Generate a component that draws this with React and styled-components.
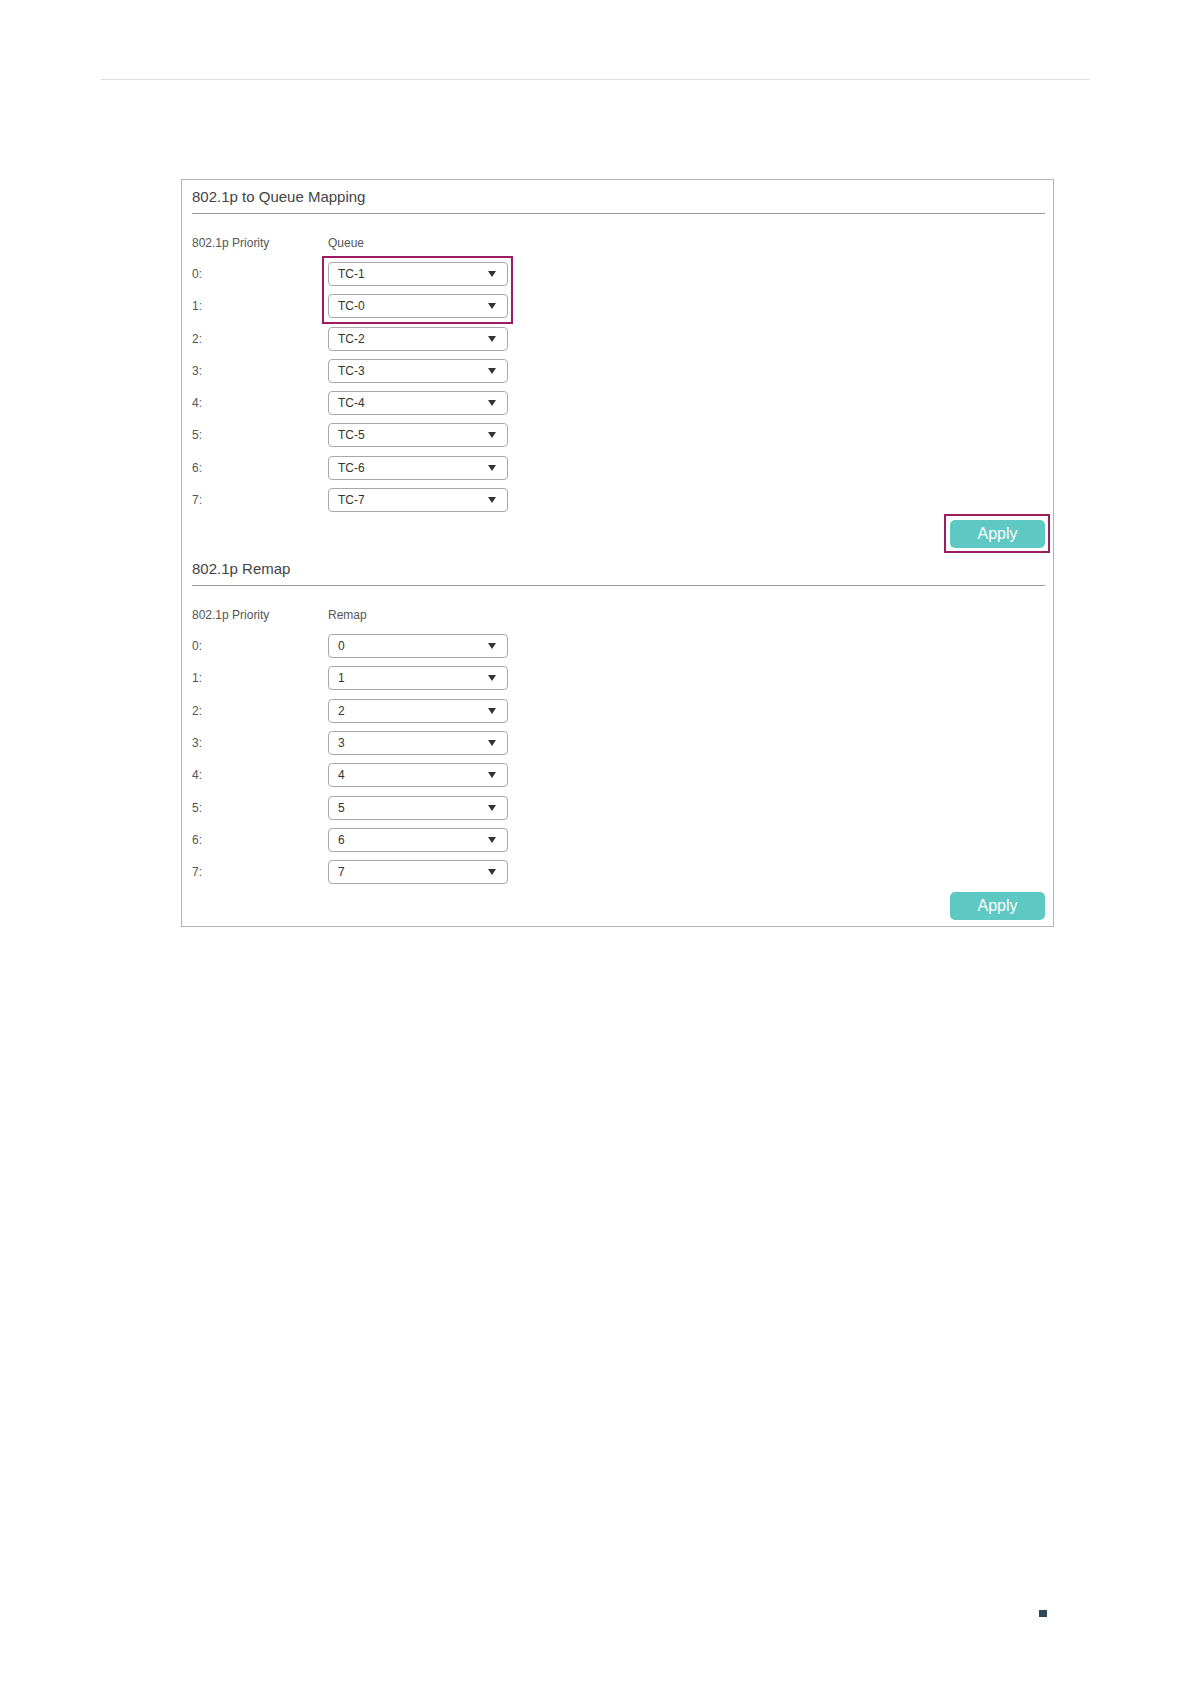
import React from 'react';
import styled, { createGlobalStyle } from 'styled-components';

const GlobalStyle = createGlobalStyle`
    html, body {
        margin: 0;
        padding: 0;
        background: #ffffff;
        font-family: "Liberation Sans", Arial, sans-serif;
    }`;

const Page = styled.div`
    width: 1191px;
    height: 1684px;
    padding-top: 79px;
    box-sizing: border-box;
    background: #fff;`;

const TopRule = styled.div`
    margin: 0 101px;
    height: 1px;
    background: #dedede;`;

const Panel = styled.div`
    margin: 99px 0 0 181px;
    width: 873px;
    box-sizing: border-box;
    border: 1px solid #b4b4b4;
    padding: 0 8px 6px 10px;`;

const SectionTitle = styled.div`
    padding: 7px 0 6px;
    line-height: 20px;
    font-size: 15px;
    color: #444;
    border-bottom: 1px solid #9a9a9a;`;

const Grid = styled.div`
    display: grid;
    grid-template-columns: 136px 180px;
    row-gap: 8.3px;
    align-items: center;`;

const HeaderRow = styled.div`
    display: grid;
    grid-template-columns: 136px 180px;
    margin: 21px 0 11px;
    line-height: 16px;
    font-size: 12px;
    color: #555;`;

const Label = styled.div`
    grid-column: 1;
    grid-row: ${p => p.$row};
    font-size: 12px;
    line-height: 16px;
    color: #555;`;

const Select = styled.div`
    grid-column: 2;
    grid-row: ${p => p.$row};
    height: 24px;
    box-sizing: border-box;
    border: 1px solid #a8a8a8;
    border-radius: 4px;
    padding: 0 11px 0 9px;
    display: flex;
    align-items: center;
    justify-content: space-between;
    font-size: 12px;
    color: #333;
    background: #fff;`;

const Caret = styled.span`
    width: 0;
    height: 0;
    border-left: 4px solid transparent;
    border-right: 4px solid transparent;
    border-top: 6px solid #333;`;

const Highlight = styled.div`
    grid-column: 2;
    grid-row: ${p => p.$from} / span ${p => p.$span};
    align-self: stretch;
    margin: -6px -5px -6px -6px;
    border: 2px solid #9c1c62;
    pointer-events: none;
    z-index: 1;`;

const ButtonRow = styled.div`
    display: flex;
    justify-content: flex-end;
    margin-top: 8px;
    margin-bottom: ${p => p.$last ? 0 : 4}px;`;

const ButtonFrame = styled.div`
    display: flex;
    margin: ${p => p.$on ? '-6px -5px -5px -6px' : '0'};
    padding: ${p => p.$on ? '4px 3px 3px 4px' : '0'};
    border: ${p => p.$on ? '2px solid #9c1c62' : 'none'};`;

const ApplyButton = styled.button`
    width: 95px;
    height: 28px;
    border: none;
    border-radius: 5px;
    background: #5ec8c2;
    color: #fff;
    font-family: "Liberation Sans", Arial, sans-serif;
    font-size: 16px;
    padding: 0;
    cursor: pointer;`;

const Footer = styled.div`
    margin: 683px 0 0 1039px;`;

const Mark = styled.div`
    width: 8px;
    height: 7px;
    background: #2e4a59;`;

function MappingSection({ title, column, values, highlightRows, highlightButton, last }) {
    return (
        <>
            <SectionTitle>{title}</SectionTitle>
            <HeaderRow>
                <span>802.1p Priority</span>
                <span>{column}</span>
            </HeaderRow>
            <Grid>
                {values.map((v, i) => (
                    <React.Fragment key={i}>
                        <Label $row={i + 1}>{i}:</Label>
                        <Select $row={i + 1}>
                            <span>{v}</span>
                            <Caret />
                        </Select>
                    </React.Fragment>
                ))}
                {highlightRows && <Highlight $from={highlightRows[0]} $span={highlightRows[1]} />}
            </Grid>
            <ButtonRow $last={last}>
                <ButtonFrame $on={highlightButton}>
                    <ApplyButton>Apply</ApplyButton>
                </ButtonFrame>
            </ButtonRow>
        </>
    );
}

export default function App() {
    const queues = ['TC-1', 'TC-0', 'TC-2', 'TC-3', 'TC-4', 'TC-5', 'TC-6', 'TC-7'];
    const remaps = ['0', '1', '2', '3', '4', '5', '6', '7'];
    return (
        <Page>
            <GlobalStyle />
            <TopRule />
            <Panel>
                <MappingSection
                    title="802.1p to Queue Mapping"
                    column="Queue"
                    values={queues}
                    highlightRows={[1, 2]}
                    highlightButton />
                <MappingSection
                    title="802.1p Remap"
                    column="Remap"
                    values={remaps}
                    last />
            </Panel>
            <Footer>
                <Mark />
            </Footer>
        </Page>
    );
}
